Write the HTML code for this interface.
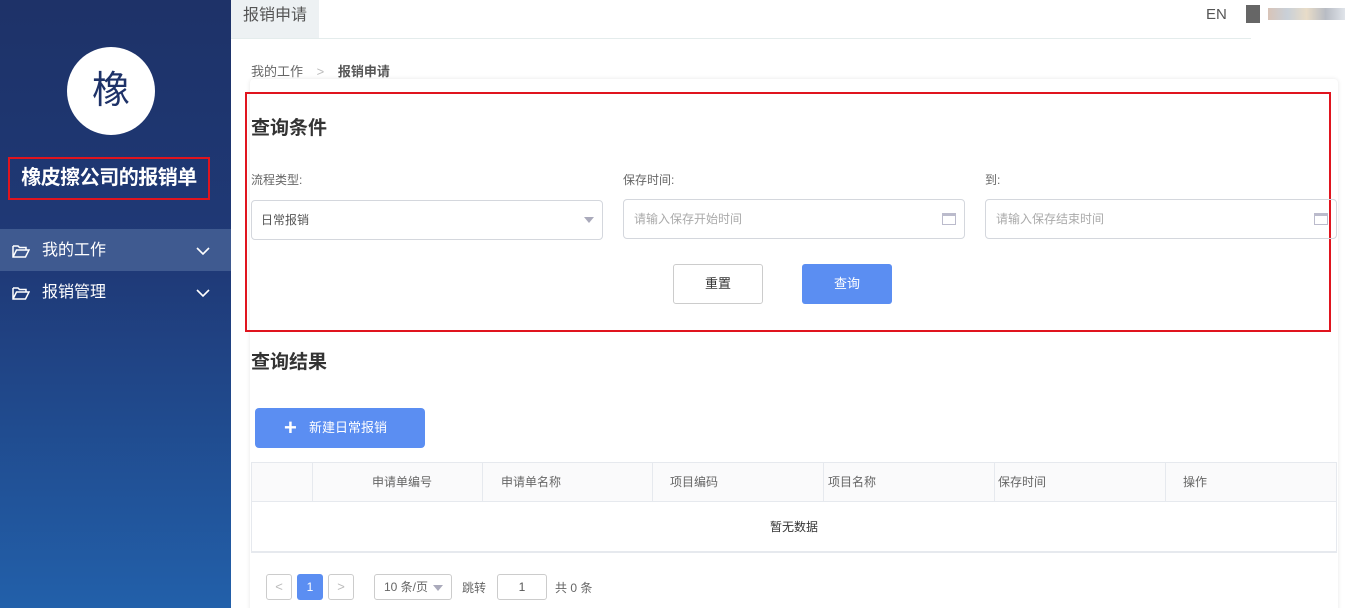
<!DOCTYPE html>
<html><head><meta charset="utf-8"><style>
*{box-sizing:border-box;margin:0;padding:0}
html,body{width:1345px;height:608px;overflow:hidden}
body{font-family:"Liberation Sans","Noto Sans CJK SC",sans-serif;background:#fff;position:relative;color:#333}
.side{position:absolute;left:0;top:0;width:231px;height:608px;background:linear-gradient(180deg,#1e3268 0%,#1f3a78 45%,#2260aa 100%)}
.av{position:absolute;left:67px;top:47px;width:88px;height:88px;border-radius:50%;background:#fff;font-size:38px;color:#1e3268;text-align:center;line-height:88px}
.title{position:absolute;left:8px;top:157px;width:202px;height:43px;border:2px solid #e0141e;color:#fff;font-weight:bold;font-size:20px;text-align:center;line-height:39px;letter-spacing:-0.5px}
.menu{position:absolute;left:0;width:231px;height:42px;color:#fff;font-size:16px;line-height:44px;padding-left:42px}
.menu svg{position:absolute}
.a{position:absolute}
</style></head><body>
<div class="side">
<div class="av">橡</div>
<div class="title">橡皮擦公司的报销单</div>
<div class="menu" style="top:229px;background:#3f5a90">我的工作
<svg style="left:12px;top:15px" width="18" height="14" viewBox="0 0 18 14"><path d="M1 2h5l1.5 1.5H14V6M1 2v11h12.5L17 6H4.5L1 13" fill="none" stroke="#fff" stroke-width="1.5"/></svg>
<svg style="left:196px;top:18px" width="14" height="9" viewBox="0 0 14 9"><path d="M1 1l6 6 6-6" fill="none" stroke="#fff" stroke-width="1.6"/></svg></div>
<div class="menu" style="top:271px">报销管理
<svg style="left:12px;top:15px" width="18" height="14" viewBox="0 0 18 14"><path d="M1 2h5l1.5 1.5H14V6M1 2v11h12.5L17 6H4.5L1 13" fill="none" stroke="#fff" stroke-width="1.5"/></svg>
<svg style="left:196px;top:18px" width="14" height="9" viewBox="0 0 14 9"><path d="M1 1l6 6 6-6" fill="none" stroke="#fff" stroke-width="1.6"/></svg></div>
</div>
<div class="a" style="left:231px;top:0;width:88px;height:38px;background:#edf1f3;font-size:16px;color:#555;line-height:32px;text-align:center">报销申请</div>
<div class="a" style="left:231px;top:38px;width:1020px;height:1px;background:#e4ecec"></div>
<div class="a" style="left:1206px;top:6px;font-size:15px;color:#555">EN</div>
<div class="a" style="left:1246px;top:5px;width:14px;height:18px;background:#666"></div>
<div class="a" style="left:1268px;top:8px;width:77px;height:12px;background:linear-gradient(90deg,#d8c4b8,#c9d0d8,#e8dcc8,#b8bcc4,#e0e4ea)"></div>
<div class="a" style="left:250px;top:79px;width:1088px;height:540px;background:#fff;border-radius:4px;box-shadow:0 0 4px rgba(0,0,0,.1)"></div>
<div class="a" style="left:251px;top:61px;font-size:13px;color:#666">我的工作 <span style="color:#bbb;margin:0 10px">&gt;</span> <b style="color:#555">报销申请</b></div>
<div class="a" style="left:245px;top:92px;width:1086px;height:240px;border:2px solid #e0141e"></div>
<div class="a" style="left:251px;top:113px;font-size:19px;font-weight:bold;color:#333">查询条件</div>
<div class="a" style="left:251px;top:171px;font-size:12px;color:#666">流程类型:</div>
<div class="a" style="left:623px;top:171px;font-size:12px;color:#666">保存时间:</div>
<div class="a" style="left:985px;top:171px;font-size:12px;color:#666">到:</div>
<div class="a" style="left:251px;top:200px;width:352px;height:40px;border:1px solid #d4d7dd;border-radius:4px;font-size:12px;color:#555;line-height:38px;padding-left:9px">日常报销<span style="position:absolute;right:8px;top:16px;border:5px solid transparent;border-top:6px solid #aab;border-bottom:0"></span></div>
<div class="a" style="left:623px;top:199px;width:342px;height:40px;border:1px solid #d4d7dd;border-radius:4px;font-size:12px;color:#aaa;line-height:38px;padding-left:10px">请输入保存开始时间<span style="position:absolute;right:8px;top:13px;width:14px;height:12px;border:1px solid #bbc;border-top:3px solid #bbc"></span></div>
<div class="a" style="left:985px;top:199px;width:352px;height:40px;border:1px solid #d4d7dd;border-radius:4px;font-size:12px;color:#aaa;line-height:38px;padding-left:10px">请输入保存结束时间<span style="position:absolute;right:8px;top:13px;width:14px;height:12px;border:1px solid #bbc;border-top:3px solid #bbc"></span></div>
<div class="a" style="left:673px;top:264px;width:90px;height:40px;border:1px solid #ccc;border-radius:3px;text-align:center;line-height:38px;font-size:13px;color:#333">重置</div>
<div class="a" style="left:802px;top:264px;width:90px;height:40px;background:#5b8ef2;border-radius:3px;text-align:center;line-height:40px;font-size:13px;color:#fff">查询</div>
<div class="a" style="left:251px;top:347px;font-size:19px;font-weight:bold;color:#333">查询结果</div>
<div class="a" style="left:255px;top:408px;width:170px;height:40px;background:#5b8ef2;border-radius:4px;color:#fff;font-size:13px;line-height:40px;padding-left:54px">新建日常报销<span style="position:absolute;left:29px;top:0;font-size:22px;font-weight:bold">+</span></div>
<div class="a" style="left:251px;top:462px;width:1086px;height:91px;border:1px solid #e6e9ee;border-bottom:2px solid #e6e9ee"></div>
<div class="a" style="left:252px;top:463px;width:1084px;height:39px;background:#fafafb;border-bottom:1px solid #e6e9ee;font-size:12px;color:#666;line-height:39px">
<span class="a" style="left:60px;top:0;width:1px;height:39px;background:#e6e9ee"></span>
<span class="a" style="left:120px">申请单编号</span>
<span class="a" style="left:230px;top:0;width:1px;height:39px;background:#e6e9ee"></span>
<span class="a" style="left:249px">申请单名称</span>
<span class="a" style="left:400px;top:0;width:1px;height:39px;background:#e6e9ee"></span>
<span class="a" style="left:418px">项目编码</span>
<span class="a" style="left:571px;top:0;width:1px;height:39px;background:#e6e9ee"></span>
<span class="a" style="left:576px">项目名称</span>
<span class="a" style="left:742px;top:0;width:1px;height:39px;background:#e6e9ee"></span>
<span class="a" style="left:746px">保存时间</span>
<span class="a" style="left:913px;top:0;width:1px;height:39px;background:#e6e9ee"></span>
<span class="a" style="left:931px">操作</span></div>
<div class="a" style="left:770px;top:518px;font-size:12px;color:#333">暂无数据</div>
<div class="a" style="left:266px;top:574px;width:26px;height:26px;border:1px solid #ccc;border-radius:3px;color:#bbb;text-align:center;line-height:24px;font-size:13px">&lt;</div>
<div class="a" style="left:297px;top:574px;width:26px;height:26px;background:#5b8ef2;border-radius:3px;color:#fff;text-align:center;line-height:26px;font-size:12px">1</div>
<div class="a" style="left:328px;top:574px;width:26px;height:26px;border:1px solid #ccc;border-radius:3px;color:#bbb;text-align:center;line-height:24px;font-size:13px">&gt;</div>
<div class="a" style="left:374px;top:574px;width:78px;height:26px;border:1px solid #ccc;border-radius:3px;color:#666;line-height:24px;font-size:12px;padding-left:9px">10 条/页<span style="position:absolute;right:8px;top:10px;border:5px solid transparent;border-top:6px solid #aab;border-bottom:0"></span></div>
<div class="a" style="left:462px;top:579px;font-size:12px;color:#666">跳转</div>
<div class="a" style="left:497px;top:574px;width:50px;height:26px;border:1px solid #ccc;border-radius:3px;color:#555;line-height:24px;font-size:12px;text-align:center">1</div>
<div class="a" style="left:555px;top:579px;font-size:12px;color:#666">共 0 条</div>
</body></html>
